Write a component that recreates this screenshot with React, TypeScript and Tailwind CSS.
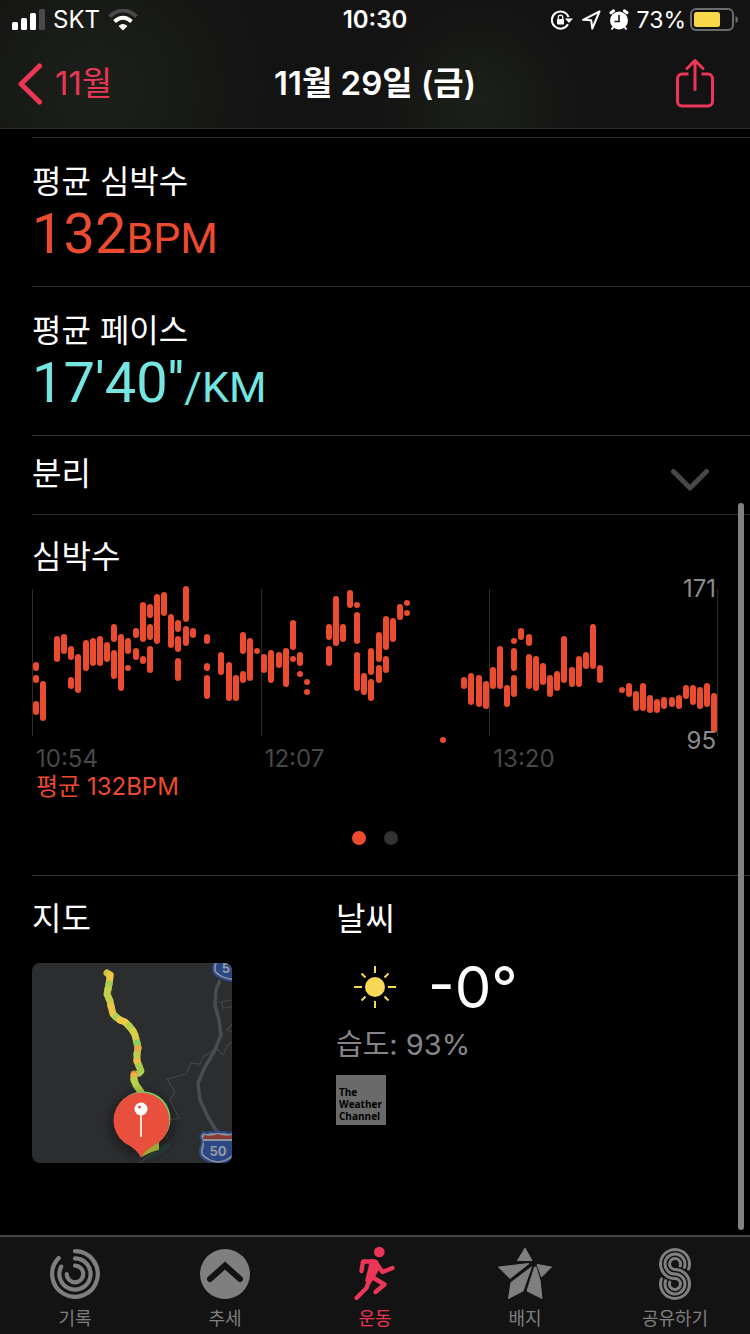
import React from "react";
import clsx from "clsx";

// [x, top, bottom] of every heart rate range on the 686x160 chart
const heartRate = [
  [4, 77, 86], [4, 90, 98], [4, 116, 130], [11, 96, 136], [25, 51, 77],
  [32, 49, 69], [39, 61, 75], [39, 92, 104], [46, 69, 108], [54, 55, 86],
  [61, 53, 81], [68, 51, 81], [75, 57, 77], [82, 39, 57], [82, 65, 94],
  [89, 49, 106], [96, 53, 69], [96, 80, 86], [104, 43, 53], [104, 63, 75],
  [111, 17, 57], [111, 71, 79], [118, 19, 33], [118, 39, 55], [118, 61, 88],
  [125, 9, 59], [132, 7, 31], [139, 29, 63], [146, 35, 47], [146, 51, 67],
  [146, 73, 96], [154, 1, 37], [154, 41, 61], [161, 43, 53], [175, 49, 59],
  [175, 78, 86], [175, 90, 114], [189, 67, 90], [197, 77, 116], [204, 90, 116],
  [211, 47, 69], [211, 86, 98], [218, 53, 96], [225, 63, 69], [232, 69, 88],
  [239, 65, 98], [247, 67, 83], [254, 63, 102], [261, 35, 65], [261, 71, 77],
  [268, 67, 81], [268, 86, 92], [275, 94, 100], [275, 104, 110], [297, 39, 55],
  [297, 61, 81], [304, 11, 61], [311, 39, 57], [318, 5, 23], [325, 17, 23],
  [325, 27, 59], [325, 67, 106], [332, 88, 110], [339, 63, 90], [339, 94, 116],
  [347, 47, 77], [347, 80, 98], [354, 31, 65], [354, 71, 88], [361, 33, 57],
  [368, 19, 35], [375, 15, 21], [375, 25, 31], [411, 152, 158], [432, 92, 104],
  [439, 88, 120], [447, 90, 122], [454, 96, 124], [461, 82, 104], [468, 61, 104],
  [475, 100, 122], [482, 53, 59], [482, 63, 86], [482, 90, 112], [489, 43, 55],
  [497, 49, 61], [497, 69, 104], [504, 71, 106], [511, 78, 100], [518, 90, 112],
  [525, 86, 106], [532, 51, 98], [540, 82, 102], [547, 71, 102], [554, 67, 84],
  [561, 39, 84], [568, 80, 98], [590, 102, 108], [597, 98, 112], [604, 106, 126],
  [611, 98, 126], [618, 110, 128], [625, 114, 128], [632, 112, 124],
  [640, 112, 122], [647, 110, 124], [654, 100, 114], [661, 100, 120],
  [668, 102, 124], [675, 98, 122], [682, 108, 148],
];

const route: [string, string][] = [
  ["M75 10L78 12", "#c9c644"],
  ["M78 12L78 14L77 21", "#ecc746"],
  ["M77 21L76 26", "#9fce52"],
  ["M76 26L75 31L78 38L79 43", "#c3cf4a"],
  ["M79 43L81 51L84 54", "#eac548"],
  ["M84 54L88 57", "#a8d052"],
  ["M88 57L93 59L97 63", "#f0cb45"],
  ["M97 63L101 68", "#b2cf4e"],
  ["M101 68L103 72L105 80", "#d6cd48"],
  ["M105 80L106 85", "#86cf58"],
  ["M106 85L105 91", "#e8a848"],
  ["M105 91L105 98", "#b9cf4c"],
  ["M105 98L107 103", "#eeb945"],
  ["M107 103L109 108L107 110", "#a9cf50"],
  ["M102 111L102 113", "#e98a41"],
  ["M102 113L102 117", "#ecb545"],
  ["M102 117L104 122L109 129", "#b5d24e"],
];

const SignalIcon = () => (
  <svg width="33" height="22" viewBox="0 0 33 22" fill="#fff" aria-hidden="true">
    <rect x="0" y="13" width="6" height="8" rx="1.5" />
    <rect x="9" y="9" width="6" height="12" rx="1.5" />
    <rect x="18" y="4" width="6" height="17" rx="1.5" />
    <rect x="27" y="0" width="6" height="21" rx="1.5" fill="#4a4a4a" />
  </svg>
);

const WifiIcon = () => (
  <svg width="30" height="22" viewBox="0 0 30 22" fill="none" aria-hidden="true">
    <path d="M1.5 7.5Q15-4.5 28.5 7.5" stroke="#4a4a4a" strokeWidth="4" />
    <path d="M6.5 12.5Q15 5 23.5 12.5" stroke="#fff" strokeWidth="4" />
    <path d="M10.5 17Q15 13 19.5 17L15 21.5Z" fill="#fff" />
  </svg>
);

const RotationLockIcon = () => (
  <svg width="22" height="20" viewBox="0 0 22 20" fill="none" aria-hidden="true">
    <path d="M17.6 7.2A8.6 8.6 0 1 0 17 14.2" stroke="#fff" strokeWidth="2" />
    <path d="M14 8.5H22L18 13Z" fill="#fff" />
    <rect x="6" y="9" width="7" height="5.5" rx="0.8" fill="#fff" />
    <path d="M7.3 9V7.3a2.2 2.2 0 0 1 4.4 0V9" stroke="#fff" strokeWidth="1.2" />
  </svg>
);

const LocationIcon = () => (
  <svg width="20" height="20" viewBox="0 0 20 20" fill="none" aria-hidden="true">
    <path
      d="M18.5 1.5L2 9.8L10.2 10.2L11.3 18.5Z"
      stroke="#fff"
      strokeWidth="2"
      strokeLinejoin="round"
    />
  </svg>
);

const AlarmIcon = () => (
  <svg width="20" height="22" viewBox="0 0 20 22" aria-hidden="true">
    <circle cx="10" cy="11.5" r="9" fill="#fff" />
    <path
      d="M2 3.8L4.6 1.8M18 3.8L15.4 1.8"
      stroke="#fff"
      strokeWidth="3"
      strokeLinecap="round"
    />
    <path d="M4.5 18L2.5 20.5M15.5 18L17.5 20.5" stroke="#fff" strokeWidth="2" />
    <path d="M10 6V12.5H5.5" stroke="#141414" strokeWidth="1.6" fill="none" />
  </svg>
);

const BatteryIcon = () => (
  <svg width="48" height="24" viewBox="0 0 48 24" aria-hidden="true">
    <rect
      x="1"
      y="1"
      width="42"
      height="21"
      rx="5"
      fill="none"
      stroke="#6c6c6c"
      strokeWidth="2"
    />
    <rect x="4" y="4" width="26" height="15" rx="2.5" fill="#f8d84a" />
    <path d="M45.5 8Q48 9 48 11.5T45.5 15Z" fill="#6c6c6c" />
  </svg>
);

const ShareIcon = () => (
  <svg
    width="38"
    height="50"
    viewBox="0 0 38 50"
    fill="none"
    stroke="#ec3658"
    strokeWidth="3"
    strokeLinecap="round"
    aria-hidden="true"
  >
    <path
      d="M12.5 15H6a4.5 4.5 0 0 0-4.5 4.5V42.5a4.5 4.5 0 0 0 4.5 4.5H32a4.5 4.5 0 0 0 4.5-4.5V19.5a4.5 4.5 0 0 0-4.5-4.5H25.5"
      strokeLinecap="butt"
    />
    <path d="M19 30.5V2M11 9.5L19 1.5L27 9.5" />
  </svg>
);

const SunIcon = () => (
  <svg
    width="42"
    height="42"
    viewBox="0 0 42 42"
    stroke="#f8d857"
    strokeWidth="2"
    aria-hidden="true"
  >
    <circle cx="21" cy="21" r="10" fill="#f8d857" stroke="none" />
    <path d="M21 0V7M21 35V42M0 21H8M34 21H42M7.5 7.5L11.5 11.5M30.5 30.5L34.5 34.5M34.5 7.5L30.5 11.5M11.5 30.5L7.5 34.5" />
  </svg>
);

const Shield = ({
  transform,
  label,
  x,
}: {
  transform: string;
  label: string;
  x: number;
}) => (
  <g transform={transform}>
    <path
      d="M4 1Q8 3 12 1Q18 2 19 0Q20 2 26 1Q30 3 34 1L37 5Q34 9 36 15Q38 20 36 25Q31 31 19 33Q7 31 2 25Q0 20 2 15Q4 9 1 5Z"
      fill="#8e939a"
      stroke="#2b4785"
      strokeWidth="2"
    />
    <path d="M5 4Q12 6 19 3Q26 6 33 4L34 8H4Z" fill="#8a3a36" />
    <path
      d="M4 10H34Q32 13 34 18Q35 22 33 24Q28 29 19 30.5Q10 29 5 24Q3 22 4 18Q6 13 4 10Z"
      fill="#2b4785"
    />
    <text
      x={x}
      y="25"
      textAnchor="middle"
      fill="#989ca3"
      className="font-[Inter] text-[13px] font-bold"
    >
      {label}
    </text>
  </g>
);

const RouteMap = () => (
  <svg
    viewBox="0 0 200 200"
    fill="none"
    role="img"
    aria-label="지도"
    className="mt-6 size-[200px] rounded-lg bg-[#2c2d2f]"
  >
    <defs>
      <radialGradient id="pin-shadow">
        <stop offset="0.6" stopColor="#000" stopOpacity="0.35" />
        <stop offset="1" stopColor="#000" stopOpacity="0" />
      </radialGradient>
    </defs>
    <path d="M112 197Q124 181 140 179Q136 192 112 197Z" fill="#25403a" />
    <g stroke="#434547" strokeWidth="1.2">
      <path d="M200 79L195 83L191 92L184 85L171 94L168 101L159 100L154 111L135 116L143 129L138 137L147 155L139 157" />
      <path d="M200 37L189 39L191 45L200 44M200 61L195 67L200 69" />
      <path d="M134 172L136 176M107 200L124 188" />
    </g>
    <path
      d="M188 17L184 27L183 42L187 57L189 72L183 87L173 104L166 120L168 137L176 154L185 169"
      stroke="#4a4c4f"
      strokeWidth="3.5"
      strokeLinejoin="round"
    />
    <Shield transform="translate(167 168)" label="50" x={19} />
    <Shield transform="translate(180 -15)" label="5" x={14} />
    <g strokeWidth="7" strokeLinejoin="round" strokeLinecap="round">
      {route.map(([d, color]) => (
        <path key={d} d={d} stroke={color} />
      ))}
    </g>
    <circle cx="110" cy="161" r="40" fill="url(#pin-shadow)" />
    <path d="M110 194Q120 188 127 187V179L112 178Z" fill="#9aa834" />
    <circle cx="111" cy="156" r="27.5" fill="#6fd56c" />
    <path
      d="M109 195Q106 188 98 183A28 28 0 1 1 121 183Q112 188 109 195Z"
      fill="#e94f3d"
    />
    <path d="M109 150V174" stroke="#fff" strokeWidth="1.6" />
    <circle cx="109" cy="146" r="6.5" fill="#fff" />
    <circle cx="107.5" cy="144" r="1.5" fill="#e94f3d" />
  </svg>
);

const RingsIcon = () => (
  <svg
    width="50"
    height="50"
    viewBox="0 0 50 50"
    fill="none"
    stroke="currentColor"
    strokeWidth="4.2"
    strokeLinecap="round"
    aria-hidden="true"
  >
    <path d="M25 2.2A22.8 22.8 0 1 1 8.7 9" />
    <path d="M25 9.4A15.6 15.6 0 1 1 11.2 17.7" />
    <path d="M25 16.7A8.3 8.3 0 1 1 16.7 25" />
  </svg>
);

const TrendIcon = () => (
  <svg width="50" height="50" viewBox="0 0 50 50" fill="none" aria-hidden="true">
    <circle cx="25" cy="25" r="25" fill="currentColor" />
    <path
      d="M10 30L25 16.5L40 30"
      stroke="#131313"
      strokeWidth="6"
      strokeLinecap="round"
    />
  </svg>
);

const RunIcon = () => (
  <svg
    width="60"
    height="60"
    viewBox="0 5 60 60"
    fill="none"
    stroke="currentColor"
    strokeWidth="4.4"
    strokeLinecap="round"
    strokeLinejoin="round"
    aria-hidden="true"
  >
    <circle cx="34.3" cy="13" r="5.3" fill="currentColor" stroke="none" />
    <path d="M16.5 32L18 22.5H29" />
    <path d="M31 24L37.5 33L47.5 29" />
    <path d="M27 38L39.5 45.5L30.5 53" />
    <path d="M25 38L21.5 49L11.5 59" />
    <path
      d="M26 22.5L31 23L33 28L28 37L24 43L22.5 41L26 27Z"
      fill="currentColor"
    />
  </svg>
);

const AwardIcon = () => (
  <svg
    width="54"
    height="54"
    viewBox="0 0 54 54"
    fill="currentColor"
    stroke="currentColor"
    strokeLinejoin="round"
    aria-hidden="true"
  >
    <path d="M27 1L19.5 13.5H34Z" />
    <path d="M0.5 20L31 16.5L12 31.5Z" />
    <path d="M39 17.5L53.5 20L43.5 30Z" />
    <path d="M33.5 20L13 35.5L10.5 51.5L25 44Z" />
    <path d="M36.5 20L29 44L44 51.5L42 33L38 20Z" />
  </svg>
);

const SharingIcon = () => (
  <svg
    width="40"
    height="54"
    viewBox="0 2 40 54"
    fill="none"
    stroke="currentColor"
    strokeWidth="3"
    strokeLinecap="round"
    aria-hidden="true"
  >
    <path d="M33.6 24A14.5 14.5 0 1 0 20 33.5A5.5 5.5 0 1 1 14.8 37.1" />
    <path d="M29.4 22.4A10 10 0 1 0 20 29A10 10 0 1 1 10.6 35.6" />
    <path d="M25.2 20.9A5.5 5.5 0 1 0 20 24.5A14.5 14.5 0 1 1 6.4 34" />
  </svg>
);

const tabs = [
  { label: "기록", icon: <RingsIcon /> },
  { label: "추세", icon: <TrendIcon /> },
  { label: "운동", icon: <RunIcon />, active: true },
  { label: "배지", icon: <AwardIcon /> },
  { label: "공유하기", icon: <SharingIcon /> },
];

const Heading = ({ children }: { children: React.ReactNode }) => (
  <h2 className="text-[32px] leading-10 font-normal">{children}</h2>
);

const Stat = ({
  title,
  value,
  unit,
  className,
}: {
  title: string;
  value: string;
  unit: string;
  className: string;
}) => (
  <section className="border-t border-[#303030] pt-6 pb-5">
    <Heading>{title}</Heading>
    <p className={clsx("font-[Roboto,sans-serif] text-[56px] leading-16", className)}>
      {value}
      <span className="text-[43px] leading-none">{unit}</span>
    </p>
  </section>
);

const HeartRateChart = () => (
  <div className="relative mt-2">
    <svg viewBox="0 0 686 160" className="w-full" role="img" aria-label="심박수">
      {[0, 229, 457, 685].map((x) => (
        <rect key={x} x={x} y="4" width="1" height="147" fill="#2d2d2d" />
      ))}
      {heartRate.map(([x, top, bottom]) => (
        <rect
          key={`${x}-${top}`}
          x={x - 3}
          y={top}
          width="6"
          height={bottom - top}
          rx="3"
          fill="#eb4b2f"
        />
      ))}
    </svg>
    <span className="absolute -top-3 right-0.5 text-2xl text-[#8b8b8f]">171</span>
    <span className="absolute -bottom-3 right-0.5 text-2xl text-[#8b8b8f]">
      95
    </span>
  </div>
);

export default function App() {
  return (
    <div className="flex min-h-screen flex-col bg-black font-[Inter,'Noto_Sans_CJK_KR',sans-serif] text-white">
      <header className="border-b border-[#2b2b2b] bg-[#131313] bg-[radial-gradient(circle_at_13%_70%,#1c2019,transparent_28%),radial-gradient(circle_at_64%_80%,#1c2019,transparent_22%)]">
        <div className="grid h-10 grid-cols-[1fr_auto_1fr] items-center px-3 text-2xl">
          <div className="flex items-center gap-2">
            <SignalIcon />
            <span>SKT</span>
            <WifiIcon />
          </div>
          <span className="font-semibold">10:30</span>
          <div className="flex items-center justify-end gap-2">
            <RotationLockIcon />
            <LocationIcon />
            <AlarmIcon />
            <div className="flex items-center gap-1">
              <span className="text-[23px]">73%</span>
              <BatteryIcon />
            </div>
          </div>
        </div>
        <div className="grid h-22 grid-cols-[1fr_auto_1fr] items-center px-[18px] text-[33px]">
          <button className="flex items-center gap-3 justify-self-start text-[#ec3658]">
            <svg
              width="25"
              height="42"
              viewBox="0 0 25 42"
              fill="none"
              stroke="currentColor"
              strokeWidth="5"
              strokeLinecap="round"
              strokeLinejoin="round"
              aria-hidden="true"
            >
              <path d="M21.5 3L3 21L21.5 39" />
            </svg>
            11월
          </button>
          <h1 className="font-semibold">11월 29일 (금)</h1>
          <button className="justify-self-end pr-[18px]" aria-label="공유">
            <ShareIcon />
          </button>
        </div>
      </header>

      <main className="relative flex-1 pt-2 pl-8">
        <Stat
          title="평균 심박수"
          value="132"
          unit="BPM"
          className="text-[#eb4b2f]"
        />
        <Stat
          title="평균 페이스"
          value={"17'40''"}
          unit="/KM"
          className="text-[#74e5e1]"
        />

        <section className="flex items-center justify-between border-t border-[#303030] pt-[18px] pr-10 pb-5">
          <Heading>분리</Heading>
          <button aria-label="펼치기" className="pt-3">
            <svg
              width="40"
              height="24"
              viewBox="0 0 40 24"
              fill="none"
              stroke="#48484a"
              strokeWidth="5"
              strokeLinecap="round"
              strokeLinejoin="round"
              aria-hidden="true"
            >
              <path d="M3.5 3.5L20 20L36.5 3.5" />
            </svg>
          </button>
        </section>

        <section className="border-t border-[#303030] pt-[22px] pr-8 pb-[30px]">
          <Heading>심박수</Heading>
          <HeartRateChart />
          <div className="grid grid-cols-3 text-2xl leading-7 text-[#484848]">
            <span className="pl-1">10:54</span>
            <span className="pl-1">12:07</span>
            <span className="pl-1">13:20</span>
          </div>
          <p className="pl-1 text-2xl leading-7 text-[#eb4b2f]">평균 132BPM</p>
          <div className="mt-[30px] flex justify-center gap-[18px]">
            <span className="size-3.5 rounded-full bg-[#eb4b2f]" />
            <span className="size-3.5 rounded-full bg-[#333333]" />
          </div>
        </section>

        <div className="grid grid-cols-[304px_1fr] border-t border-[#303030] pt-[23px] pb-8">
          <section>
            <Heading>지도</Heading>
            <RouteMap />
          </section>
          <section>
            <Heading>날씨</Heading>
            <div className="mt-5 flex h-14 items-center gap-8 pl-[18px]">
              <SunIcon />
              <span className="text-[58px] leading-14">-0°</span>
            </div>
            <p className="mt-2.5 text-[29px] leading-10 text-[#86868a]">
              습도: 93%
            </p>
            <p className="mt-2.5 flex size-[50px] flex-col justify-end bg-[#6a6a6a] pb-[3px] pl-[3px] font-['Open_Sans',sans-serif] text-[10px] leading-3 font-bold text-black">
              <span>The</span>
              <span>Weather</span>
              <span>Channel</span>
            </p>
          </section>
        </div>

        <div className="absolute right-1.5 bottom-[5px] h-[727px] w-1.5 rounded-full bg-[#808080]" />
      </main>

      <nav className="sticky bottom-0 grid grid-cols-5 border-t-2 border-[#454545] bg-[#131313] pb-[3px]">
        {tabs.map(({ label, icon, active }) => (
          <button
            key={label}
            aria-current={active ? "page" : undefined}
            className={clsx(
              "flex flex-col items-center text-lg leading-6",
              active ? "text-[#ec3658]" : "text-[#7f7f7f]"
            )}
          >
            <span className="flex h-[70px] items-center pt-1">{icon}</span>
            {label}
          </button>
        ))}
      </nav>
    </div>
  );
}
